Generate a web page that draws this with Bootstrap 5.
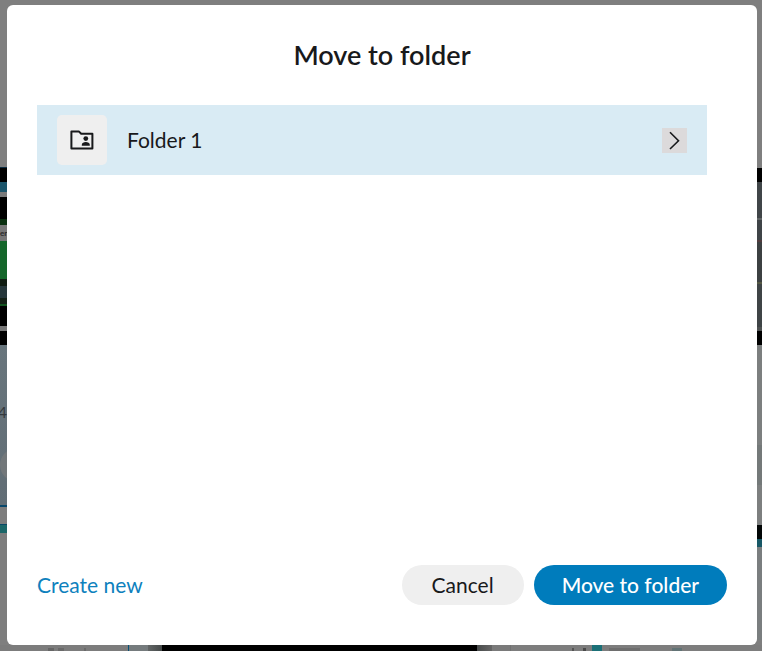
<!DOCTYPE html>
<html lang="en">
<head>
<meta charset="utf-8">
<meta name="viewport" content="width=device-width, initial-scale=1">
<title>Move to folder</title>
<link href="https://cdn.jsdelivr.net/npm/bootstrap@5.3.0/dist/css/bootstrap.min.css" rel="stylesheet">
<style>
body{font-family:Lato,"Liberation Sans",sans-serif;color:#18191b;background:#7f7f7f}
/* dimmed page that shows around the dialog */
.stage{padding:5px 5px 6px 7px;overflow:hidden;
background:
linear-gradient(#7f7f7f 167px,#0b2c42 167px 168px,#000 168px 182px,#1b556b 182px 192px,#7a7a7a 192px 197px,#000 197px 219px,#092f0f 219px 225px,#777 225px 241px,#14662a 241px 279px,#101c12 279px 286px,#26373b 286px 298px,#142016 298px 304px,#12531f 304px 306px,#000 306px 326px,#777 326px 331px,#000 331px 345px,#68757c 345px,#616d75 505px,#07476b 505px 507px,#7d7d7d 507px 524px,#084766 524px 525px,#1b6668 525px 533px,#7d7d7d 533px 640px,transparent 640px) left top/7px 100% no-repeat,
linear-gradient(#7f7f7f 168px,#000 168px 182px,#404548 182px 218px,#606465 218px 220px,#3f4447 220px 240px,#513c3e 240px 242px,#3c4041 242px 282px,#555844 282px 284px,#3f4446 284px 327px,#4d5050 327px 331px,#000 331px 345px,#7c7f7f 345px 445px,#747979 445px 485px,#7d7f7f 485px 525px,#020606 525px 539px,#175866 539px 547px,#7a7e7f 547px 640px,transparent 640px) right top/5px 100% no-repeat,
linear-gradient(90deg,transparent 48px,#666 48px 54px,transparent 54px 58px,#6a6a6a 58px 64px,transparent 64px 84px,#6a6a6a 84px 86px,transparent 86px 572px,#555 572px 574px,transparent 574px 583px,#4a4a4a 583px 586px,transparent 586px 609px,#6e6e6e 609px 640px,transparent 640px 672px,#627375 672px 682px,transparent 682px) left bottom/100% 3px no-repeat,
linear-gradient(90deg,#7c7c7c 128px,#075176 128px 129px,#757b7d 129px 148px,#626666 148px,#454949 162px,#000 162px 477px,#484b4b 477px,#666 492px,#7a7a7a 492px 510px,#727272 510px 511px,#7d7d7d 511px 592px,#1b7077 592px 602px,#7d7d7d 602px) left bottom/100% 6px no-repeat,#7f7f7f}
.dimmed{left:0;z-index:0;width:7px;overflow:hidden;line-height:16px}
.dim-tag{top:225px;height:16px;font-size:8px;font-weight:700;color:#292929}
.dim-count{top:404px;height:16px;font-size:16px;color:#34393d}
.dim-dot{top:448px;height:34px;width:17px;border-radius:17px 0 0 17px;background:#72777a}
.dialog{border-radius:6px;padding:30px 30px 40px;z-index:1}
.dialog-title{font-size:27px;line-height:40px;font-weight:600}
.folder-list{margin:30px 20px 0 0}
.folder-row{background:#d9ebf4;padding:10px 20px;font-size:21px;gap:20px}
.folder-icon{width:50px;height:50px;background:#efefef;border-radius:5px}
.open-btn{width:25px;height:25px;background:#dcdadb}
.dialog-actions{gap:10px}
.action{padding:0 30px;font-size:21px;line-height:40px;border:0}
.cancel{background:#efefef;color:#18191b}
.confirm{background:#007cbc;color:#fff;font-weight:500;padding:0 28px}
.create-link{font-size:21px;color:#0e81bd}
</style>
</head>
<body>
<div class="stage min-vh-100 d-flex position-relative">
  <span class="dimmed dim-tag position-absolute" aria-hidden="true">en</span>
  <span class="dimmed dim-count position-absolute d-flex justify-content-end" aria-hidden="true">4</span>
  <span class="dimmed dim-dot position-absolute"></span>
  <main class="dialog bg-white flex-fill d-flex flex-column position-relative" role="dialog" aria-labelledby="dialog-title">
    <h1 id="dialog-title" class="dialog-title text-center m-0">Move to folder</h1>
    <ul class="folder-list list-unstyled flex-fill mb-0">
      <li class="folder-row d-flex align-items-center">
        <span class="folder-icon d-flex align-items-center justify-content-center">
          <svg width="26" height="26" viewBox="0 0 26 26" aria-hidden="true"><path d="M2.4 4.4h7.4l2.4 2.4h11.2v14.8h-21z" fill="none" stroke="#18191b" stroke-width="2" stroke-linejoin="round"/><circle cx="16.8" cy="11.6" r="2.4" fill="#18191b"/><path d="M12.8 18.8v-1c0-1.8 2-2.7 4-2.7s4 .9 4 2.7v1z" fill="#18191b"/></svg>
        </span>
        <span class="flex-fill">Folder 1</span>
        <button type="button" class="open-btn border-0 p-0 d-flex" aria-label="Open Folder 1">
          <svg width="25" height="25" viewBox="0 0 25 25" aria-hidden="true"><path d="M8 4.3l8.5 8.4L8 21" fill="none" stroke="#18191b" stroke-width="1.6"/></svg>
        </button>
      </li>
    </ul>
    <div class="dialog-actions d-flex align-items-center">
      <a href="#" class="create-link text-decoration-none me-auto">Create new</a>
      <button type="button" class="action cancel btn rounded-pill">Cancel</button>
      <button type="button" class="action confirm btn rounded-pill">Move to folder</button>
    </div>
  </main>
</div>
<script src="https://cdn.jsdelivr.net/npm/bootstrap@5.3.0/dist/js/bootstrap.bundle.min.js"></script>
</body>
</html>
